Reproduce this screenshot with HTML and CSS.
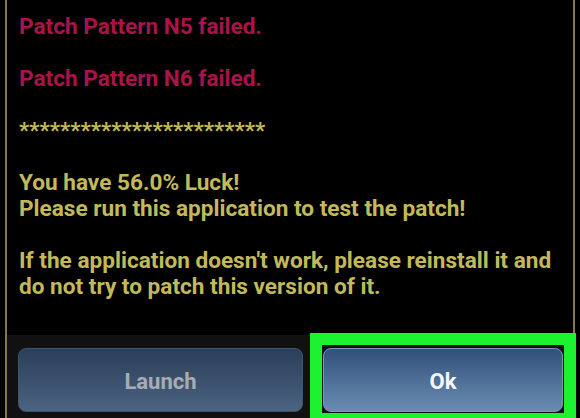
FILE: index.html
```html
<!DOCTYPE html>
<html>
<head>
<meta charset="utf-8">
<link rel="stylesheet" href="styles.css">
</head>
<body>
<div class="dialog">
  <div class="content">
    <p class="line red">Patch Pattern N5 failed.</p>
    <p class="line red gap">Patch Pattern N6 failed.</p>
    <p class="line yellow gap">************************</p>
    <p class="line yellow gap">You have 56.0% Luck!</p>
    <p class="line yellow">Please run this application to test the patch!</p>
    <p class="line yellow gap">If the application doesn't work, please reinstall it and</p>
    <p class="line yellow">do not try to patch this version of it.</p>
  </div>
  <div class="buttons">
    <button class="btn launch">Launch</button>
    <div class="highlight">
      <button class="btn ok">Ok</button>
    </div>
  </div>
</div>
</body>
</html>
```
FILE: styles.css
```css
html, body {
  margin: 0;
  padding: 0;
  background: #000;
  width: 580px;
  height: 418px;
  overflow: hidden;
}
.dialog {
  margin-left: 5px;
  width: 566px;
  height: 418px;
  border-left: 2px solid #857656;
  border-right: 2px solid #857656;
  display: flex;
  flex-direction: column;
}
.content {
  height: 321px;
  padding: 14px 0 0 12px;
  font-family: Roboto, "Liberation Sans", sans-serif;
  font-weight: 700;
  font-size: 22.6px;
  line-height: 26px;
}
.line {
  margin: 0;
  white-space: nowrap;
}
.gap {
  margin-top: 26px;
}
.red { color: #a8144a; }
.yellow { color: #c2ba58; }
.buttons {
  flex: 1;
  background: #111111;
  display: flex;
  gap: 20px;
  padding: 13px 0 0 11px;
}
.btn {
  height: 64px;
  border-radius: 8px;
  font-family: Roboto, "Liberation Sans", sans-serif;
  font-weight: 700;
  font-size: 22px;
  padding: 2px 0 0;
}
.launch {
  width: 285px;
  color: #a6acb2;
  background: linear-gradient(#2a3e58, #4a6482);
  border: 1px solid #3d5470;
}
.highlight {
  position: relative;
  width: 240px;
  height: 64px;
}
.highlight::after {
  content: "";
  position: absolute;
  left: -13px;
  right: -13px;
  top: -15px;
  bottom: -13px;
  border: 12px solid #1df22e;
  pointer-events: none;
}
.ok {
  width: 240px;
  color: #f4f6f8;
  background: linear-gradient(#31507a, #6a8cb2);
  border: 1px solid #7e98b4;
}
```
